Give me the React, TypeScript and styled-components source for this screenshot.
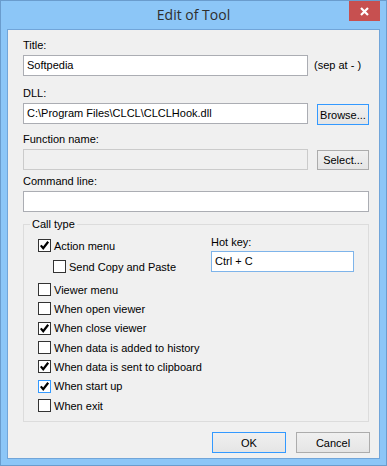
import React from 'react';
import styled, { createGlobalStyle } from 'styled-components';

const Global = createGlobalStyle`
  html, body { margin: 0; padding: 0; background: #ffffff; }
  * { box-sizing: border-box; }
`;

const Window = styled.div`
  width: 387px;
  height: 466px;
  border: 1px solid #6a9ccd;
  background: #8cc6f7;
  display: flex;
  flex-direction: column;
  font-family: "Liberation Sans", Arial, sans-serif;
  font-size: 11px;
  color: #000;
`;

const TitleBar = styled.div`
  height: 28px;
  display: grid;
  grid-template-columns: 1fr auto 1fr;
  align-items: start;
`;

const TitleText = styled.div`
  grid-column: 2;
  font-family: "Open Sans", "Noto Sans", sans-serif;
  font-size: 14px;
  line-height: 28px;
  color: #2e2e2e;
`;

const CloseButton = styled.div`
  grid-column: 3;
  justify-self: end;
  width: 31px;
  height: 20px;
  margin-right: 6px;
  background: #c75050;
  display: flex;
  align-items: center;
  justify-content: center;
`;

const Client = styled.div`
  flex: 1;
  margin: 0 6px 6px;
  border: 1px solid #71a5d9;
  background: #f0f0f0;
  padding: 9px 10px 0 15px;
  display: flex;
  flex-direction: column;
`;

const Field = styled.div<{ $mt: number }>`
  margin-top: ${(p) => p.$mt}px;
  display: flex;
  flex-direction: column;
`;

const Label = styled.div`
  height: 13px;
  line-height: 13px;
  margin-bottom: 3px;
  white-space: nowrap;
`;

const Row = styled.div`
  display: flex;
  align-items: flex-start;
`;

const Input = styled.div<{ $w?: number; $disabled?: boolean; $focus?: boolean }>`
  width: ${(p) => (p.$w ? `${p.$w}px` : '100%')};
  height: 21px;
  border: 1px solid ${(p) => (p.$focus ? '#7eb4ea' : p.$disabled ? '#cbcbcb' : '#abadb3')};
  background: ${(p) => (p.$disabled ? '#f0f0f0' : '#ffffff')};
  padding: 0 3px;
  line-height: 19px;
  white-space: nowrap;
  overflow: hidden;
`;

const SideNote = styled.div`
  margin-left: 6px;
  line-height: 21px;
  white-space: nowrap;
`;

const Button = styled.div<{ $w: number; $default?: boolean; $ml?: number; $mt?: number }>`
  width: ${(p) => p.$w}px;
  height: ${(p) => (p.$default !== undefined ? 21 : 20)}px;
  margin-left: ${(p) => p.$ml ?? 0}px;
  margin-top: ${(p) => p.$mt ?? 0}px;
  border: 1px solid ${(p) => (p.$default ? '#3399ff' : '#acacac')};
  background: linear-gradient(#f0f0f0, #e5e5e5);
  display: flex;
  align-items: center;
  justify-content: center;
  white-space: nowrap;
`;

const Group = styled.fieldset`
  margin: 6px 0 0;
  padding: 5px 0 0 14px;
  height: 204px;
  border: 1px solid #dcdcdc;
  min-width: 0;
`;

const Legend = styled.legend`
  margin-left: -8px;
  padding: 0 2px;
  height: 13px;
  line-height: 13px;
`;

const GroupBody = styled.div`
  display: grid;
  grid-template-columns: 173px 1fr;
`;

const CheckList = styled.div`
  display: flex;
  flex-direction: column;
`;

const CheckRow = styled.div<{ $mt?: number; $indent?: number; $h?: number }>`
  height: ${(p) => p.$h ?? 19}px;
  margin-top: ${(p) => p.$mt ?? 0}px;
  padding-left: ${(p) => p.$indent ?? 0}px;
  display: flex;
  align-items: center;
  white-space: nowrap;
`;

const Box = styled.div<{ $focus?: boolean }>`
  width: 13px;
  height: 13px;
  flex: none;
  border: 1px solid ${(p) => (p.$focus ? '#3399ff' : '#333333')};
  background: #ffffff;
  margin-right: 3px;
  display: flex;
  align-items: center;
  justify-content: center;
`;

const HotKeyCol = styled.div`
  display: flex;
  flex-direction: column;
`;

const HotLabel = styled.div`
  height: 13px;
  line-height: 13px;
  margin-bottom: 2px;
`;

const Footer = styled.div`
  display: flex;
  justify-content: flex-end;
  margin-top: 10px;
  margin-right: -1px;
`;

const Check = () => (
  <svg width="11" height="11" viewBox="0 0 11 11">
    <path d="M1.8 5.4 L4.2 8.2 L9.2 1.8" fill="none" stroke="#000" strokeWidth="2.2" />
  </svg>
);

type CB = { label: string; checked?: boolean; focus?: boolean };

const CheckBox: React.FC<CB & { mt?: number; indent?: number; h?: number }> = ({ label, checked, focus, mt, indent, h }) => (
  <CheckRow $mt={mt} $indent={indent} $h={h}>
    <Box $focus={focus}>{checked && <Check />}</Box>
    {label}
  </CheckRow>
);

const items: CB[] = [
  { label: 'Viewer menu' },
  { label: 'When open viewer' },
  { label: 'When close viewer', checked: true },
  { label: 'When data is added to history' },
  { label: 'When data is sent to clipboard', checked: true },
  { label: 'When start up', checked: true, focus: true },
  { label: 'When exit' },
];

export default function App() {
  return (
    <>
      <Global />
      <Window>
        <TitleBar>
          <TitleText>Edit of Tool</TitleText>
          <CloseButton>
            <svg width="9" height="9" viewBox="0 0 9 9">
              <path d="M1 1 L8 8 M8 1 L1 8" stroke="#fff" strokeWidth="2.2" />
            </svg>
          </CloseButton>
        </TitleBar>
        <Client>
          <Field $mt={0}>
            <Label>Title:</Label>
            <Row>
              <Input $w={285}>Softpedia</Input>
              <SideNote>(sep at - )</SideNote>
            </Row>
          </Field>
          <Field $mt={11}>
            <Label>DLL:</Label>
            <Row>
              <Input $w={285}>C:\Program Files\CLCL\CLCLHook.dll</Input>
              <Button $w={52} $ml={9} $mt={1} $default>Browse...</Button>
            </Row>
          </Field>
          <Field $mt={8}>
            <Label>Function name:</Label>
            <Row>
              <Input $w={285} $disabled />
              <Button $w={52} $ml={9} $mt={1}>Select...</Button>
            </Row>
          </Field>
          <Field $mt={5}>
            <Label>Command line:</Label>
            <Input />
          </Field>
          <Group>
            <Legend>Call type</Legend>
            <GroupBody>
              <CheckList>
                <CheckBox label="Action menu" checked />
                <CheckBox label="Send Copy and Paste" mt={2} indent={15} />
                {items.map((it, i) => (
                  <CheckBox key={it.label} {...it} mt={i === 0 ? 4 : 0} h={19.33} />
                ))}
              </CheckList>
              <HotKeyCol>
                <HotLabel>Hot key:</HotLabel>
                <Input $w={143} $focus>Ctrl + C</Input>
              </HotKeyCol>
            </GroupBody>
          </Group>
          <Footer>
            <Button $w={74} $default>OK</Button>
            <Button $w={74} $ml={10} $default={false}>Cancel</Button>
          </Footer>
        </Client>
      </Window>
    </>
  );
}
